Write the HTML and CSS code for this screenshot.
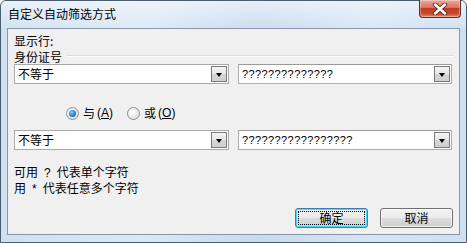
FILE: index.html
```html
<!DOCTYPE html>
<html lang="zh-CN">
<head>
    <meta charset="UTF-8">
    <meta name="viewport" content="width=device-width, initial-scale=1.0">
    <title>自定义自动筛选方式</title>
    <link rel="stylesheet" href="styles.css">
</head>
<body>
    <div class="window">
        <div class="titlebar">
            <span class="title">自定义自动筛选方式</span>
            <button class="close">
                <svg width="18" height="12" viewBox="0 0 18 12">
                    <path d="M4 1.5 L14 10.5 M14 1.5 L4 10.5" stroke="#4a2a22" stroke-width="4.2" stroke-linecap="round"/>
                    <path d="M4 1.5 L14 10.5 M14 1.5 L4 10.5" stroke="#fff" stroke-width="2.4" stroke-linecap="round"/>
                </svg>
            </button>
        </div>
        <div class="client">
            <div class="show-label">显示行:</div>
            <div class="field-label">
                <span>身份证号</span>
                <i class="groove"></i>
            </div>
            <div class="criteria">
                <div class="combo list">
                    <span class="value">不等于</span>
                    <b class="drop"></b>
                </div>
                <div class="combo edit">
                    <span class="value q">??????????????</span>
                    <b class="drop"></b>
                </div>
            </div>
            <div class="logic">
                <label class="radio checked"><i></i>与<span class="key">(<u>A</u>)</span></label>
                <label class="radio"><i></i>或<span class="key">(<u>O</u>)</span></label>
            </div>
            <div class="criteria second">
                <div class="combo list">
                    <span class="value">不等于</span>
                    <b class="drop"></b>
                </div>
                <div class="combo edit">
                    <span class="value q">?????????????????</span>
                    <b class="drop"></b>
                </div>
            </div>
            <div class="hint">
                <p>可用<span class="wild">?</span>代表单个字符</p>
                <p>用<span class="wild">*</span>代表任意多个字符</p>
            </div>
            <div class="buttons">
                <button class="default"><span>确定</span></button>
                <button><span>取消</span></button>
            </div>
        </div>
    </div>
</body>
</html>
```

FILE: styles.css
```css
* {
    margin: 0;
    padding: 0;
    box-sizing: border-box;
}
body {
    width: 467px;
    height: 243px;
    overflow: hidden;
    background: #fff;
    font-family: "Noto Sans CJK SC", "Liberation Sans", sans-serif;
    font-size: 12px;
    color: #000;
}
.window {
    width: 467px;
    height: 243px;
    border: 1px solid #4c5d70;
    border-radius: 6px 6px 0 0;
    background: linear-gradient(90deg, #cfe0f1 0%, #dbe8f5 30%, #c8daee 55%, #d6e5f4 80%, #cddff1 100%);
    display: flex;
    flex-direction: column;
}
.titlebar {
    height: 27px;
    display: flex;
    align-items: flex-start;
    background: linear-gradient(180deg, rgba(255,255,255,0.55), rgba(255,255,255,0.1));
    border-radius: 5px 5px 0 0;
}
.title {
    padding: 6px 0 0 7px;
    line-height: 14px;
    color: #000;
}
.close {
    margin-left: auto;
    margin-right: 5px;
    margin-top: -1px;
    width: 42px;
    height: 18px;
    border: 1px solid #5a2c24;
    border-top: none;
    border-radius: 0 0 4px 4px;
    background: linear-gradient(180deg, #e9a99b 0%, #d8735f 45%, #c23a22 50%, #c94a2f 80%, #e08a6a 100%);
    box-shadow: inset 0 0 0 1px rgba(255,255,255,0.35);
    display: flex;
    justify-content: center;
    align-items: center;
}
.close svg {
    display: block;
}
.client {
    flex: 1;
    margin: 0 6px 7px 6px;
    border: 1px solid #8796a8;
    background: #f0f0f0;
    padding: 4px 6px 0 6px;
    display: flex;
    flex-direction: column;
}
.show-label {
    line-height: 16px;
    height: 16px;
}
.field-label {
    height: 15px;
    display: flex;
    align-items: center;
    line-height: 15px;
}
.groove {
    flex: 1;
    margin-left: 5px;
    margin-right: -1px;
    margin-top: -2px;
    height: 2px;
    border-top: 1px solid #d5dfe5;
    border-bottom: 1px solid #fff;
}
.criteria {
    display: flex;
    gap: 9px;
}
.criteria.second {
    margin-top: 9px;
}
.combo {
    height: 20px;
    width: 215px;
    background: #fff;
    border: 1px solid #a9a9a9;
    display: flex;
    align-items: center;
    padding: 1px;
}
.combo.edit {
    width: 214px;
    border-color: #abadb3;
    border-top-color: #9a9a9a;
}
.combo .value {
    flex: 1;
    padding-left: 2px;
    line-height: 16px;
}
.combo .q {
    font-family: "Liberation Sans", sans-serif;
    font-size: 11px;
    letter-spacing: 0.4px;
    color: #000;
}
.drop {
    width: 16px;
    height: 16px;
    border: 1px solid #7a7a7a;
    background: linear-gradient(180deg, #f4f4f4 0%, #e6e6e6 50%, #d6d6d6 51%, #cfcfcf 100%);
    display: flex;
    justify-content: center;
    align-items: center;
}
.drop::after {
    content: '';
    width: 0;
    height: 0;
    border-style: solid;
    border-width: 4px 3.5px 0 3.5px;
    border-color: #000 transparent transparent transparent;
    margin-top: 1px;
}
.logic {
    margin-top: 21px;
    height: 16px;
    display: flex;
    align-items: center;
    padding-left: 52px;
    gap: 14px;
}
.radio {
    display: flex;
    align-items: center;
    line-height: 16px;
}
.radio i {
    margin-right: 4px;
    width: 13px;
    height: 13px;
    border-radius: 50%;
    border: 1px solid #8f8f8f;
    background: radial-gradient(circle at 40% 35%, #ffffff 0%, #e8e8e8 60%, #cfcfcf 100%);
    display: flex;
    justify-content: center;
    align-items: center;
}
.radio.checked i::after {
    content: '';
    width: 7px;
    height: 7px;
    border-radius: 50%;
    background: radial-gradient(circle at 40% 35%, #8fd3ff 0%, #2a8fd8 45%, #0b4f94 100%);
}
.radio .key {
    margin-left: 2px;
    font-family: "Liberation Sans", sans-serif;
    font-size: 12px;
}
.radio u {
    text-decoration: underline;
    text-underline-offset: 1px;
}
.hint {
    margin-top: 14px;
}
.hint p {
    line-height: 16px;
    height: 16px;
}
.hint .wild {
    margin: 0 6px;
    font-family: "Liberation Sans", sans-serif;
    font-size: 12px;
}
.buttons {
    margin-top: 12px;
    display: flex;
    justify-content: flex-end;
    gap: 12px;
}
.buttons button {
    width: 73px;
    height: 20px;
    border: 1px solid #707070;
    border-radius: 3px;
    background: linear-gradient(180deg, #f2f2f2 0%, #ebebeb 48%, #dddddd 50%, #cfcfcf 100%);
    box-shadow: inset 0 0 0 1px rgba(255,255,255,0.7);
    font-family: "Noto Sans CJK SC", "Liberation Sans", sans-serif;
    font-size: 12px;
    color: #000;
    display: flex;
    justify-content: center;
    align-items: center;
    padding: 2px;
}
.buttons button span {
    flex: 1;
    height: 14px;
    line-height: 14px;
    display: flex;
    justify-content: center;
    align-items: center;
}
.buttons button.default {
    border-color: #3c7fb1;
    box-shadow: inset 0 0 0 1px #48d8fb;
}
.buttons button.default span {
    border: 1px dotted #000;
}
```
